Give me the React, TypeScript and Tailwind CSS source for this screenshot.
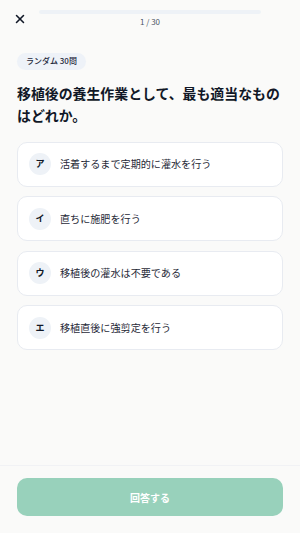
import { X } from 'lucide-react'

const options = [
  { label: 'ア', text: '活着するまで定期的に灌水を行う' },
  { label: 'イ', text: '直ちに施肥を行う' },
  { label: 'ウ', text: '移植後の灌水は不要である' },
  { label: 'エ', text: '移植直後に強剪定を行う' },
]

export default function App() {
  return (
    <div
      lang="ja"
      className="w-[300px] h-[533px] bg-[#fafaf9] flex flex-col text-[#111827]"
      style={{ fontFamily: '"Noto Sans CJK JP", "Noto Sans", sans-serif' }}
    >
      {/* Header */}
      <div className="flex items-start px-[13px] pt-[10px] h-[34px]">
        <button className="w-[14px] h-[14px] mt-[2px] flex items-center justify-center text-[#111827]">
          <X size={16} strokeWidth={2.6} />
        </button>
        <div className="flex-1 flex flex-col items-center ml-[12px] mr-[26px]">
          <div className="w-full h-[4px] rounded-full bg-[#eef2f7]" />
          <span className="text-[8px] leading-[10px] text-[#4b5563] mt-[3px]">1 / 30</span>
        </div>
      </div>

      {/* Body */}
      <div className="flex-1 px-[17px] pt-[11px]">
        <span className="inline-flex items-center h-[17px] px-[9px] rounded-full bg-[#eef2f8] text-[8px] font-medium text-[#1e293b]">
          ランダム 30問
        </span>
        <h1 className="mt-[12px] text-[13.9px] leading-[22px] font-bold whitespace-nowrap">
          移植後の養生作業として、最も適当なもの
          <br />
          はどれか。
        </h1>

        <div className="mt-[16px] flex flex-col gap-[9.5px]">
          {options.map(o => (
            <button
              key={o.label}
              className="h-[45px] w-full flex items-center gap-[9px] px-[11px] bg-white rounded-[10px] border border-[#e8ebf1] text-left"
            >
              <span className="w-[22px] h-[22px] rounded-full bg-[#eef2f7] flex items-center justify-center text-[9px] font-bold text-[#111827] shrink-0">
                {o.label}
              </span>
              <span className="text-[10.1px] text-[#1f2937]">{o.text}</span>
            </button>
          ))}
        </div>
      </div>

      {/* Footer */}
      <div className="border-t border-[#f1f2f5] px-[17px] pt-[12px] pb-[17px]">
        <button className="w-full h-[38px] rounded-[10px] bg-[#98d1bb] text-white text-[10px] font-bold">
          回答する
        </button>
      </div>
    </div>
  )
}
